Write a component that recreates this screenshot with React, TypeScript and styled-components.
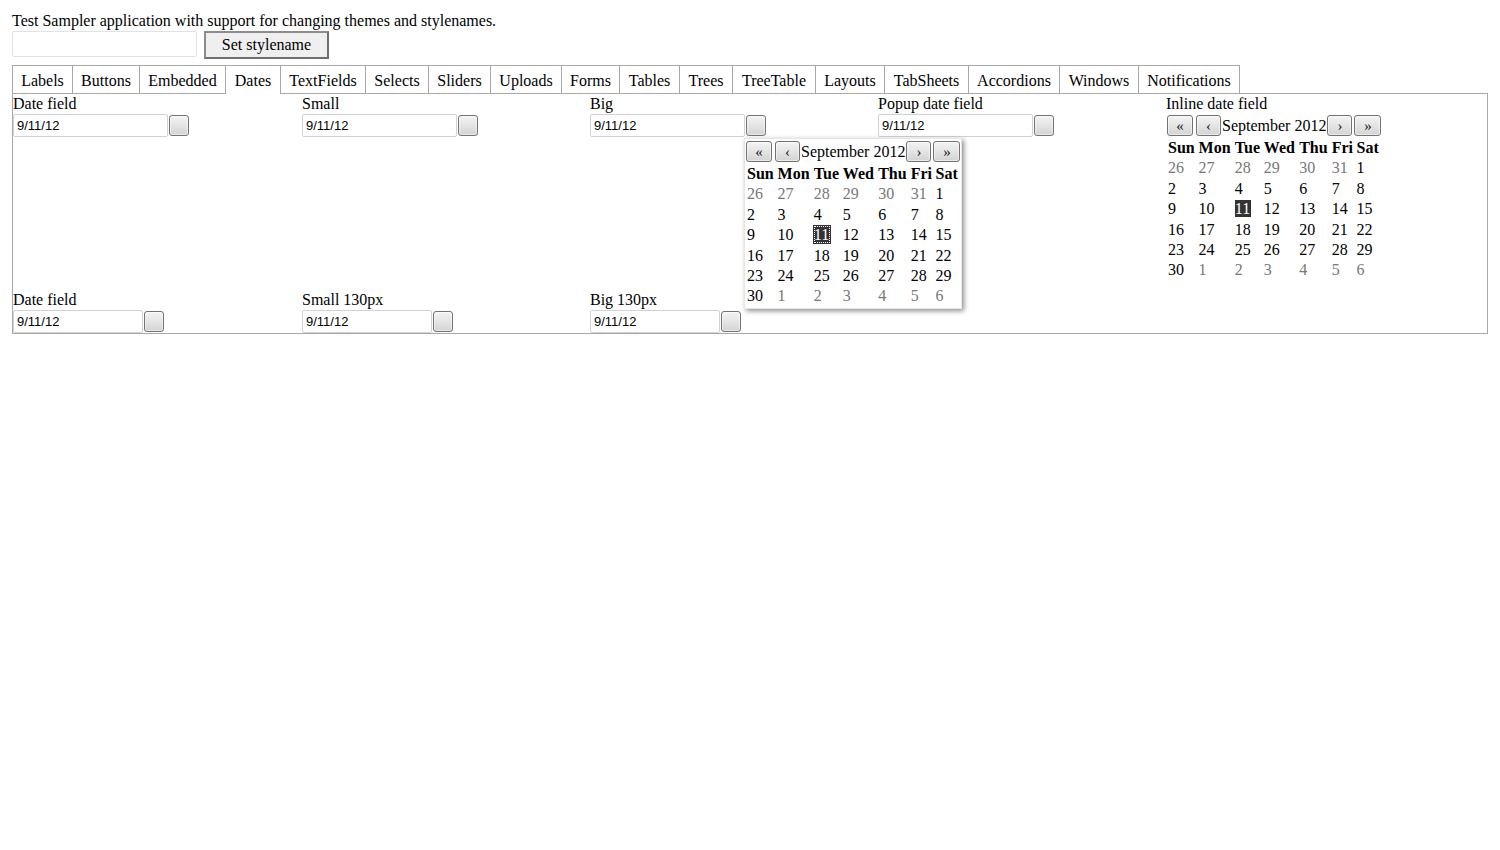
import React from "react";
import styled, { createGlobalStyle, css } from "styled-components";

const GlobalStyle = createGlobalStyle`
  html, body { margin: 0; padding: 0; background: #fff; }
  body {
    font-family: "Liberation Serif", "Times New Roman", serif;
    font-size: 16px;
    color: #000;
  }
`;

const Page = styled.div`
  padding: 12px 12px;
`;

const Title = styled.div`
  line-height: 18px;
`;

const StyleRow = styled.div`
  display: flex;
  align-items: flex-start;
  gap: 7px;
  margin-top: 1px;
`;

const StyleInput = styled.input`
  box-sizing: border-box;
  width: 185px;
  height: 26px;
  margin: 0;
  border: 1px solid #dfe3e9;
  border-radius: 2px;
  background: #fff;
  outline: none;
`;

const StyleButton = styled.button`
  box-sizing: border-box;
  width: 125px;
  height: 28px;
  margin: 0;
  padding: 0;
  font-family: "Liberation Serif", "Times New Roman", serif;
  font-size: 16px;
  color: #000;
  background: #efefef;
  border: 2px solid;
  border-color: #8c8c8c #6f6f6f #6f6f6f #8c8c8c;
`;

const TabBar = styled.div`
  display: flex;
  margin-top: 6px;
  position: relative;
  z-index: 1;
`;

const Tab = styled.div<{ $w: number; $selected?: boolean; $last?: boolean }>`
  box-sizing: border-box;
  width: ${(p) => p.$w}px;
  height: 28px;
  padding-top: 1px;
  text-align: center;
  line-height: 27px;
  border-top: 1px solid #a9a9a9;
  border-left: 1px solid #a9a9a9;
  white-space: nowrap;
  background: #fff;
  ${(p) =>
    p.$last &&
    css`
      border-right: 1px solid #a9a9a9;
    `}
  ${(p) =>
    p.$selected &&
    css`
      height: 29px;
      margin-bottom: -1px;
    `}
`;

const Panel = styled.div`
  border: 1px solid #a9a9a9;
  display: grid;
  grid-template-columns: 289px 288px 288px 288px 1fr;
  align-items: start;
`;

const Cell = styled.div`
  position: relative;
`;

const FieldLabel = styled.div`
  line-height: 18px;
  padding-top: 1px;
`;

const FieldRow = styled.div`
  display: flex;
  align-items: center;
  height: 23px;
  margin-top: 1px;
`;

const DateInput = styled.input<{ $w: number }>`
  box-sizing: border-box;
  width: ${(p) => p.$w}px;
  height: 23px;
  margin: 0;
  padding: 0 3px;
  border: 1px solid #cfd2d6;
  border-radius: 2px;
  font-family: "Liberation Sans", Arial, sans-serif;
  font-size: 13px;
  color: #000;
  background: #fff;
  outline: none;
`;

const buttonLook = css`
  box-sizing: border-box;
  height: 21px;
  padding: 0;
  margin: 0;
  border: 1px solid #727272;
  border-radius: 3px;
  background: linear-gradient(#f4f4f4, #e6e6e6 45%, #d3d3d3);
  box-shadow: inset 0 0 0 1px rgba(255, 255, 255, 0.5);
`;

const PickerButton = styled.button`
  ${buttonLook};
  width: 20px;
  margin-left: 1px;
`;

const Calendar = styled.div<{ $popup?: boolean }>`
  display: inline-block;
  padding: 1px;
  background: #fff;
  ${(p) =>
    p.$popup
      ? css`
          position: absolute;
          left: 154px;
          top: 44px;
          border: 1px solid #e6e6e6;
          box-shadow: 2px 2px 5px rgba(0, 0, 0, 0.45);
          z-index: 5;
        `
      : css`
          margin-bottom: 8px;
        `}
`;

const CalNav = styled.div`
  display: flex;
  align-items: center;
  height: 23px;
`;

const NavButton = styled.button<{ $w: number; $gap?: number }>`
  ${buttonLook};
  width: ${(p) => p.$w}px;
  margin-right: ${(p) => p.$gap ?? 0}px;
  font-family: "Liberation Serif", "Times New Roman", serif;
  font-size: 15px;
  line-height: 17px;
  padding-top: 1px;
  color: #1a1a2a;
`;

const MonthLabel = styled.span`
  margin: 0 1px;
  line-height: 18px;
  white-space: nowrap;
`;

const DayTable = styled.table`
  width: 100%;
  border-collapse: separate;
  border-spacing: 0;
  margin-top: 1px;
`;

const HeadCell = styled.th`
  padding: 1px;
  text-align: left;
  font-weight: bold;
  line-height: 18.4px;
`;

const DayCell = styled.td<{ $muted?: boolean }>`
  padding: 1px;
  text-align: left;
  line-height: 18.4px;
  color: ${(p) => (p.$muted ? "#777" : "#000")};
`;

const SelectedDay = styled.span<{ $focused?: boolean }>`
  display: inline-block;
  background: #333;
  color: #fff;
  line-height: 17px;
  padding: 0 1px 0 0;
  ${(p) =>
    p.$focused &&
    css`
      outline: 1px dotted #fff;
      outline-offset: -1px;
      box-shadow: 0 0 0 1px #333;
    `}
`;

const tabs: [string, number][] = [
  ["Labels", 60],
  ["Buttons", 67],
  ["Embedded", 86],
  ["Dates", 55],
  ["TextFields", 85],
  ["Selects", 63],
  ["Sliders", 62],
  ["Uploads", 71],
  ["Forms", 58],
  ["Tables", 60],
  ["Trees", 53],
  ["TreeTable", 83],
  ["Layouts", 69],
  ["TabSheets", 84],
  ["Accordions", 91],
  ["Windows", 79],
  ["Notifications", 102],
];

const days = ["Sun", "Mon", "Tue", "Wed", "Thu", "Fri", "Sat"];

type Day = { n: number; muted: boolean };
const weeks: Day[][] = (() => {
  const all: Day[] = [];
  [26, 27, 28, 29, 30, 31].forEach((n) => all.push({ n, muted: true }));
  for (let n = 1; n <= 30; n++) all.push({ n, muted: false });
  for (let n = 1; n <= 6; n++) all.push({ n, muted: true });
  const w: Day[][] = [];
  for (let i = 0; i < all.length; i += 7) w.push(all.slice(i, i + 7));
  return w;
})();

function CalendarView({ popup }: { popup?: boolean }) {
  return (
    <Calendar $popup={popup}>
      <CalNav>
        <NavButton $w={26} $gap={3}>«</NavButton>
        <NavButton $w={25}>‹</NavButton>
        <MonthLabel>September 2012</MonthLabel>
        <NavButton $w={25} $gap={2}>›</NavButton>
        <NavButton $w={27}>»</NavButton>
      </CalNav>
      <DayTable>
        <thead>
          <tr>
            {days.map((d) => (
              <HeadCell key={d}>{d}</HeadCell>
            ))}
          </tr>
        </thead>
        <tbody>
          {weeks.map((w, i) => (
            <tr key={i}>
              {w.map((d, j) => (
                <DayCell key={j} $muted={d.muted}>
                  {!d.muted && d.n === 11 ? (
                    <SelectedDay $focused={popup}>11</SelectedDay>
                  ) : (
                    d.n
                  )}
                </DayCell>
              ))}
            </tr>
          ))}
        </tbody>
      </DayTable>
    </Calendar>
  );
}

function DateField({
  label,
  width = 155,
  children,
}: {
  label: string;
  width?: number;
  children?: React.ReactNode;
}) {
  return (
    <Cell>
      <FieldLabel>{label}</FieldLabel>
      <FieldRow>
        <DateInput $w={width} defaultValue="9/11/12" />
        <PickerButton />
      </FieldRow>
      {children}
    </Cell>
  );
}

export default function App() {
  return (
    <>
      <GlobalStyle />
      <Page>
        <Title>Test Sampler application with support for changing themes and stylenames.</Title>
        <StyleRow>
          <StyleInput />
          <StyleButton>Set stylename</StyleButton>
        </StyleRow>
        <TabBar>
          {tabs.map(([t, w], i) => (
            <Tab key={t} $w={w} $selected={t === "Dates"} $last={i === tabs.length - 1}>
              {t}
            </Tab>
          ))}
        </TabBar>
        <Panel>
          <DateField label="Date field" />
          <DateField label="Small" />
          <DateField label="Big">
            <CalendarView popup />
          </DateField>
          <DateField label="Popup date field" />
          <Cell>
            <FieldLabel>Inline date field</FieldLabel>
            <CalendarView />
          </Cell>
          <DateField label="Date field" width={130} />
          <DateField label="Small 130px" width={130} />
          <DateField label="Big 130px" width={130} />
        </Panel>
      </Page>
    </>
  );
}
